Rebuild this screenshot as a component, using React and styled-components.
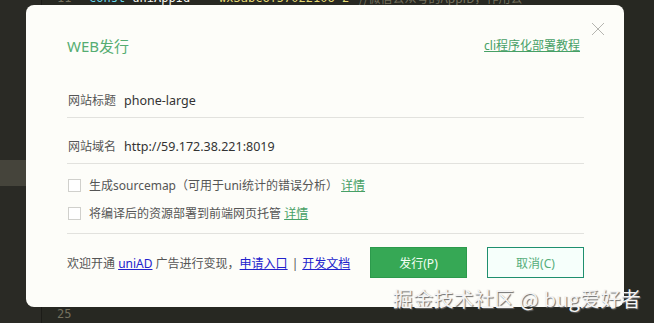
import React from 'react';
import styled, { createGlobalStyle } from 'styled-components';

const Global = createGlobalStyle`
  html, body {
    margin: 0;
    padding: 0;
    background: #272822;
    overflow: hidden;
  }
`

const Editor = styled.div`
  position: relative;
  width: 654px;
  height: 323px;
  display: flex;
  background: #272822;
  overflow: hidden;
  font-family: "DejaVu Sans Mono", "Liberation Mono", monospace;
`

const SideBar = styled.div`
  width: 41px;
  border-right: 1px solid #1c1c18;
  background: #2a2a25;
  display: flex;
  flex-direction: column;
  padding-top: 160px;
`

const SideHighlight = styled.div`
  height: 26px;
  background: #45443b;
`

const Code = styled.div`
  flex: 1;
  display: flex;
  flex-direction: column;
  margin-top: -13px;
`

const Line = styled.div`
  display: flex;
  height: 22.6px;
  line-height: 22.6px;
  font-size: 12px;
  white-space: pre;
`

const LineNo = styled.span`
  width: 32px;
  padding-left: 15px;
  color: #75715e;
`

const Tok = styled.span`
  color: ${({ c }) => c || '#d8d8d2'};
  font-family: ${({ cjk }) => cjk ? '"Noto Sans CJK SC", sans-serif' : 'inherit'};
`

const Dialog = styled.div`
  position: absolute;
  left: 26px;
  top: 5px;
  width: 598px;
  height: 302px;
  box-sizing: border-box;
  padding: 30px 40px 0 41px;
  background: #fdfdf9;
  border-radius: 8px;
  display: flex;
  flex-direction: column;
  font-family: "Noto Sans", "Noto Sans CJK SC", sans-serif;
  font-size: 12px;
  color: #555;
`

const Head = styled.div`
  display: flex;
  justify-content: space-between;
  align-items: center;
  height: 20px;
`

const Title = styled.div`
  font-size: 15px;
  color: #55ad72;
`

const GreenLink = styled.a`
  color: #47a066;
  text-decoration: underline;
  font-size: 12px;
  margin-right: ${({ end }) => end ? '4px' : '0'};
`

const Close = styled.svg`
  position: absolute;
  top: 17px;
  right: 19px;
`

const Form = styled.div`
  margin-top: 17px;
  display: flex;
  flex-direction: column;
`

const Row = styled.div`
  height: 46px;
  box-sizing: border-box;
  padding: 0 0 8px 1px;
  display: flex;
  align-items: flex-end;
  line-height: 16px;
  border-bottom: 1px solid #e2e2de;
`

const Label = styled.span`
  color: #555;
  margin-right: 8px;
`

const Value = styled.span`
  color: #333;
  font-size: 12.5px;
`

const Options = styled.div`
  padding: 7px 0 6px 1px;
  border-bottom: 1px solid #e2e2de;
  display: flex;
  flex-direction: column;
`

const Option = styled.label`
  height: 28px;
  display: flex;
  align-items: center;
  gap: 8px;
  color: #555;
`

const Box = styled.span`
  width: 11px;
  height: 11px;
  border: 1px solid #d0d0cc;
  background: #fff;
`

const Footer = styled.div`
  margin-top: 13px;
  display: flex;
  align-items: center;
  height: 31px;
`

const Promo = styled.div`
  flex: 1;
  color: #555;
  white-space: nowrap;
`

const BlueLink = styled.a`
  color: #2222cc;
  text-decoration: underline;
`

const Sep = styled.span`
  color: #555;
  margin: 0 4px;
`

const Button = styled.button`
  width: 97px;
  height: 31px;
  margin-left: ${({ first }) => first ? '0' : '20px'};
  box-sizing: border-box;
  font-family: "Noto Sans", "Noto Sans CJK SC", sans-serif;
  font-size: 12px;
  border: 1px solid ${({ primary }) => primary ? '#2c9a4c' : '#1f8f6e'};
  background: ${({ primary }) => primary ? '#36a855' : '#f6fffb'};
  color: ${({ primary }) => primary ? '#f3fff4' : '#55ad7a'};
`

const Watermark = styled.div`
  position: absolute;
  right: 13px;
  bottom: 12px;
  font-family: "Noto Sans CJK SC", sans-serif;
  font-size: 20px;
  letter-spacing: 0.3px;
  line-height: 24px;
  color: #f4f4f4;
  text-shadow: 1px 1px 1px #6a6a6a;
`

const lines = [
  [[`const `, '#66d9ef'], ['uniAppId = ', '#f8f8f2'], ['"wx3abc6f57022106 2"', '#e6db74'], [' //微信公众号的AppID，作用公', '#75715e', true]],
  [], [], [], [], [], [], [], [], [], [], [], [], [], [],
]

export default function App() {
  return (
    <Editor>
      <Global />
      <SideBar>
        <SideHighlight />
      </SideBar>
      <Code>
        {lines.map((toks, i) => (
          <Line key={i}>
            <LineNo>{11 + i}</LineNo>
            {toks.map(([t, c, cjk], j) => <Tok key={j} c={c} cjk={cjk}>{t}</Tok>)}
          </Line>
        ))}
      </Code>

      <Dialog>
        <Close width="14" height="14" viewBox="0 0 14 14">
          <path d="M1 1 L13 13 M13 1 L1 13" stroke="#b5b5b0" strokeWidth="1" fill="none" />
        </Close>
        <Head>
          <Title>WEB发行</Title>
          <GreenLink href="#" end>cli程序化部署教程</GreenLink>
        </Head>
        <Form>
          <Row>
            <Label>网站标题</Label>
            <Value>phone-large</Value>
          </Row>
          <Row>
            <Label>网站域名</Label>
            <Value>http://59.172.38.221:8019</Value>
          </Row>
          <Options>
            <Option>
              <Box />
              <span>生成sourcemap（可用于uni统计的错误分析） <GreenLink href="#">详情</GreenLink></span>
            </Option>
            <Option>
              <Box />
              <span>将编译后的资源部署到前端网页托管 <GreenLink href="#">详情</GreenLink></span>
            </Option>
          </Options>
        </Form>
        <Footer>
          <Promo>
            欢迎开通 <BlueLink href="#">uniAD</BlueLink> 广告进行变现，<BlueLink href="#">申请入口</BlueLink>
            <Sep>|</Sep>
            <BlueLink href="#">开发文档</BlueLink>
          </Promo>
          <Button primary first>发行(P)</Button>
          <Button>取消(C)</Button>
        </Footer>
      </Dialog>

      <Watermark>掘金技术社区 @ bug爱好者</Watermark>
    </Editor>
  )
}
